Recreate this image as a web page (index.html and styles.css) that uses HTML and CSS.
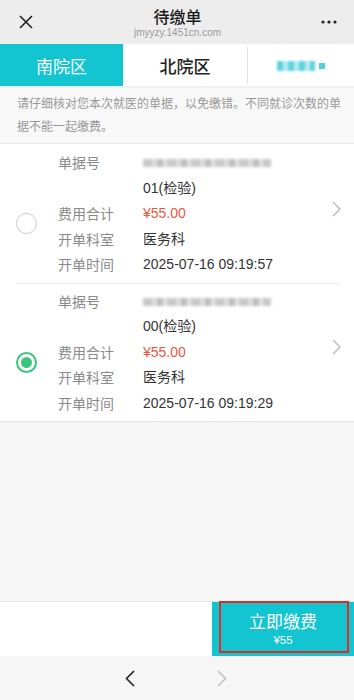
FILE: index.html
```html
<!DOCTYPE html>
<html lang="zh-CN">
<head>
<meta charset="utf-8">
<title>待缴单</title>
<link rel="stylesheet" href="styles.css">
</head>
<body>
<div class="page">
  <header class="topbar">
    <div class="icon-btn">
      <svg width="14" height="14" viewBox="0 0 14 14"><path d="M1 1 L13 13 M13 1 L1 13" stroke="#222" stroke-width="1.6" fill="none"/></svg>
    </div>
    <div class="title-box">
      <div class="title">待缴单</div>
      <div class="subtitle">jmyyzy.1451cn.com</div>
    </div>
    <div class="icon-btn dots">
      <svg width="16" height="4" viewBox="0 0 16 4"><circle cx="2" cy="2" r="1.6" fill="#222"/><circle cx="8" cy="2" r="1.6" fill="#222"/><circle cx="14" cy="2" r="1.6" fill="#222"/></svg>
    </div>
  </header>

  <nav class="tabs">
    <div class="tab active">南院区</div>
    <div class="tab">北院区</div>
    <div class="tab third"><span class="blur-teal"></span><span class="blur-dot"></span></div>
  </nav>

  <div class="notice">请仔细核对您本次就医的单据，以免缴错。不同就诊次数的单据不能一起缴费。</div>

  <main class="list">
    <div class="card">
      <div class="radio-col"><span class="radio"></span></div>
      <div class="rows">
        <div class="row"><span class="label">单据号</span><span class="value"><span class="blur-gray"></span><br>01(检验)</span></div>
        <div class="row"><span class="label">费用合计</span><span class="value price">¥55.00</span></div>
        <div class="row"><span class="label">开单科室</span><span class="value">医务科</span></div>
        <div class="row"><span class="label">开单时间</span><span class="value">2025-07-16 09:19:57</span></div>
      </div>
      <div class="arrow-col">
        <svg width="9" height="16" viewBox="0 0 9 16"><path d="M1 1 L8 8 L1 15" stroke="#b5b5b5" stroke-width="1.2" fill="none"/></svg>
      </div>
    </div>
    <div class="card second">
      <div class="radio-col"><span class="radio checked"></span></div>
      <div class="rows">
        <div class="row"><span class="label">单据号</span><span class="value"><span class="blur-gray"></span><br>00(检验)</span></div>
        <div class="row"><span class="label">费用合计</span><span class="value price">¥55.00</span></div>
        <div class="row"><span class="label">开单科室</span><span class="value">医务科</span></div>
        <div class="row"><span class="label">开单时间</span><span class="value">2025-07-16 09:19:29</span></div>
      </div>
      <div class="arrow-col">
        <svg width="9" height="16" viewBox="0 0 9 16"><path d="M1 1 L8 8 L1 15" stroke="#b5b5b5" stroke-width="1.2" fill="none"/></svg>
      </div>
    </div>
  </main>

  <footer class="paybar">
    <div class="pay-left"></div>
    <div class="pay-btn">
      <div class="pay-title">立即缴费</div>
      <div class="pay-amount">¥55</div>
      <span class="highlight"></span>
    </div>
  </footer>

  <div class="navbar">
    <svg width="10" height="17" viewBox="0 0 10 17"><path d="M9 1 L1.5 8.5 L9 16" stroke="#222" stroke-width="1.6" fill="none"/></svg>
    <svg width="10" height="17" viewBox="0 0 10 17"><path d="M1 1 L8.5 8.5 L1 16" stroke="#c2c2c2" stroke-width="1.6" fill="none"/></svg>
  </div>
</div>
</body>
</html>
```

FILE: styles.css
```css
* { box-sizing: border-box; }
html, body { margin: 0; padding: 0; }
body {
  font-family: "Liberation Sans", "Noto Sans CJK SC", sans-serif;
  color: #333;
  background: #f7f7f7;
}
.page {
  height: 700px;
  display: flex;
  flex-direction: column;
}
.topbar {
  height: 44px;
  flex: none;
  background: #ededed;
  display: flex;
  align-items: center;
  justify-content: space-between;
  padding: 0 17px 0 18px;
}
.icon-btn { width: 16px; display: flex; align-items: center; justify-content: center; }
.title-box {
  display: flex;
  flex-direction: column;
  align-items: center;
  padding-top: 2px;
}
.title {
  font-family: "Noto Sans CJK SC", sans-serif;
  font-size: 16px;
  font-weight: 500;
  color: #1a1a1a;
  line-height: 18px;
}
.subtitle {
  font-size: 10px;
  color: #9a9a9a;
  line-height: 12px;
  margin-top: 2px;
}
.tabs {
  height: 44px;
  flex: none;
  display: grid;
  grid-template-columns: 123px 124px 1fr;
  background: #fff;
  border-bottom: 2px solid #f0f0f0;
}
.tab {
  display: flex;
  align-items: center;
  justify-content: center;
  font-family: "Noto Sans CJK SC", sans-serif;
  font-size: 17px;
  font-weight: 500;
  color: #222;
}
.tab.active { background: #13c4d1; color: #fff; font-weight: 400; }
.tab.third {
  margin: 3px 0 2px;
  border-left: 1px solid #e2e2e2;
  gap: 4px;
}
.blur-teal {
  width: 38px;
  height: 10px;
  background: repeating-linear-gradient(90deg, #5fd4dd 0 6px, #b4ecf0 6px 11px);
  filter: blur(1px);
}
.blur-dot {
  width: 6px;
  height: 6px;
  background: #4fd0db;
  filter: blur(0.5px);
}
.notice {
  flex: none;
  background: #f8f8f8;
  color: #999;
  font-family: "Noto Sans CJK SC", sans-serif;
  font-size: 12px;
  line-height: 23px;
  padding: 3px 8px 6px 17px;
  border-bottom: 1px solid #eaeaea;
}
.list {
  flex: 1;
  background: #f7f7f7;
}
.card {
  display: flex;
  background: #fff;
  padding: 6px 0 5px;
  position: relative;
}
.card.second { border-bottom: 1px solid #e5e5e5; }
.card + .card::before {
  content: "";
  position: absolute;
  top: 0;
  left: 16px;
  right: 16px;
  border-top: 1px solid #e8e8e8;
}
.radio-col {
  width: 58px;
  flex: none;
  padding: 63px 0 0 16px;
}
.radio {
  display: block;
  width: 21px;
  height: 21px;
  border-radius: 50%;
  border: 1px solid #c9c9c9;
}
.radio.checked {
  border: 2px solid #3cc47f;
  position: relative;
}
.radio.checked::after {
  content: "";
  position: absolute;
  left: 3px;
  top: 3px;
  width: 11px;
  height: 11px;
  border-radius: 50%;
  background: #3cc47f;
}
.rows { flex: 1; }
.row {
  display: flex;
  font-size: 14px;
  line-height: 25.5px;
}
.label {
  width: 85px;
  flex: none;
  color: #8a8a8a;
  font-family: "Noto Sans CJK SC", sans-serif;
}
.value { color: #333; }
.value.price { color: #e9573d; }
.blur-gray {
  display: inline-block;
  width: 128px;
  height: 8px;
  vertical-align: middle;
  background: repeating-linear-gradient(90deg, #c8c8c8 0 9px, #dcdcdc 9px 14px, #bdbdbd 14px 20px, #e3e3e3 20px 24px);
  filter: blur(1.6px);
}
.arrow-col {
  width: 22px;
  flex: none;
  display: flex;
  align-items: center;
  padding-bottom: 10px;
}
.paybar {
  height: 55px;
  flex: none;
  display: flex;
  background: #fff;
  border-top: 1px solid #e6e6e6;
}
.pay-left { flex: 1; }
.pay-btn {
  width: 142px;
  background: #13c4d1;
  color: #fff;
  display: flex;
  flex-direction: column;
  align-items: center;
  justify-content: center;
  position: relative;
  padding-top: 1px;
}
.pay-title {
  font-family: "Noto Sans CJK SC", sans-serif;
  font-size: 17px;
  line-height: 22px;
}
.pay-amount {
  font-size: 11.5px;
  line-height: 17px;
}
.highlight {
  position: absolute;
  left: 7px;
  right: 5px;
  top: -1px;
  bottom: 3px;
  border: 2px solid #e32b25;
}
.navbar {
  height: 44px;
  flex: none;
  background: #f6f6f6;
  display: flex;
  align-items: center;
  justify-content: center;
  gap: 82px;
  padding-right: 2px;
}
```
